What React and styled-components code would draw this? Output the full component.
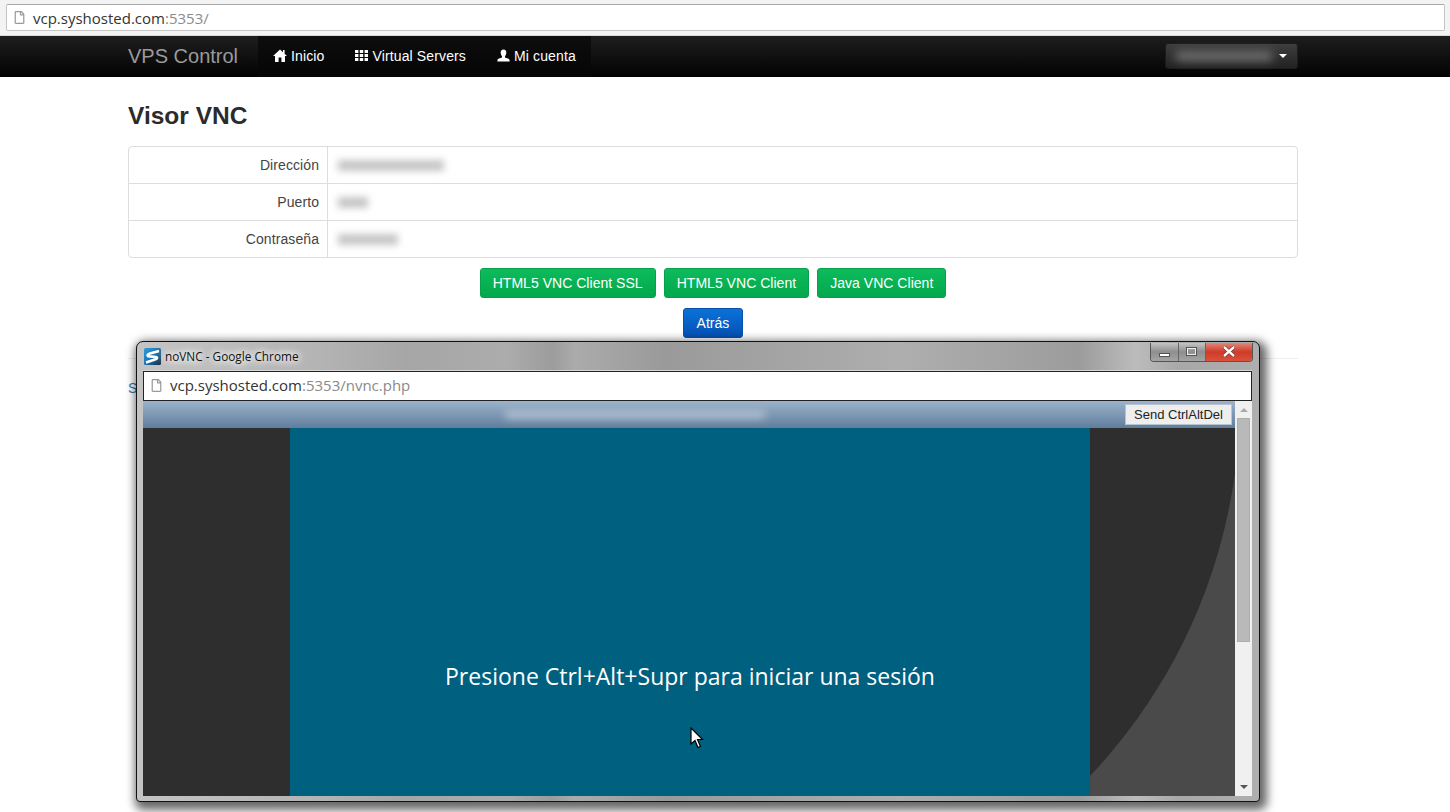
import React from 'react';
import styled, { createGlobalStyle } from 'styled-components';
import { FaRegFile } from 'react-icons/fa';

const GlobalStyle = createGlobalStyle`
  html, body {
    margin: 0;
    height: 812px;
    overflow: hidden;
    background: #fff;
    font-family: "Liberation Sans", Arial, sans-serif;
    font-size: 14px;
    color: #333;
  }
  * { box-sizing: border-box; }
`;

const Page = styled.div`
  position: relative;
  width: 1450px;
  height: 812px;
  overflow: hidden;
`;

const BrowserBar = styled.div`
  height: 36px;
  padding: 4px 5px 5px 6px;
  background: #f3f3f3;
  border-bottom: 1px solid #d8d8d8;
`;

const AddressBox = styled.div`
  height: 27px;
  display: flex;
  align-items: center;
  gap: 7px;
  padding-left: 6px;
  background: #fff;
  border: 1px solid #c4c4c4;
  border-top-color: #a8a8a8;
  border-radius: 2px;
  font-family: "Open Sans", sans-serif;
  font-size: 15px;
  color: #333;
`;

const PageIcon = styled(FaRegFile)`
  color: #999;
  font-size: 13px;
  flex: none;
`;

const Port = styled.span`
  color: #8a8a8a;
`;

const Navbar = styled.nav`
  height: 41px;
  padding: 0 152px 0 128px;
  display: flex;
  align-items: stretch;
  background: linear-gradient(to bottom, #1e1e1e, #020202);
`;

const Brand = styled.div`
  width: 130px;
  display: flex;
  align-items: center;
  color: #9a9a9a;
  font-size: 20px;
`;

const NavList = styled.div`
  display: flex;
  background: linear-gradient(to bottom, #0d0d0d, #050505);
`;

const NavItem = styled.div`
  display: flex;
  align-items: center;
  gap: 4px;
  padding: 0 15px 2px 15px;
  color: #fff;
  font-size: 14px;
  letter-spacing: 0.13px;
  & + & {
    padding-left: 16px;
  }
`;

const UserMenu = styled.div`
  margin: 7px 0 0 auto;
  width: 133px;
  height: 26px;
  display: flex;
  align-items: center;
  justify-content: space-between;
  padding: 0 10px 0 10px;
  background: linear-gradient(to bottom, #3e3e3e, #222);
  border: 1px solid #1c1c1c;
  border-radius: 3px;
`;

const UserBlur = styled.span`
  width: 96px;
  height: 10px;
  background: #6e6e6e;
  filter: blur(5px);
`;

const Caret = styled.span`
  width: 0;
  height: 0;
  border-left: 4px solid transparent;
  border-right: 4px solid transparent;
  border-top: 4px solid #fff;
`;

const Container = styled.main`
  width: 1170px;
  margin-left: 128px;
`;

const Title = styled.h2`
  margin: 25px 0 17px;
  font-size: 24.5px;
  line-height: 27px;
  font-weight: 700;
  color: #2b2b2b;
`;

const InfoTable = styled.div`
  border: 1px solid #ddd;
  border-radius: 4px;
`;

const InfoRow = styled.div`
  height: 36px;
  display: grid;
  grid-template-columns: 199px 1fr;
  align-items: stretch;
  & + & {
    height: 37px;
    border-top: 1px solid #ddd;
  }
`;

const InfoLabel = styled.div`
  display: flex;
  align-items: center;
  justify-content: flex-end;
  padding-right: 8px;
  border-right: 1px solid #ddd;
  color: #444;
  letter-spacing: 0.08px;
`;

const InfoValue = styled.div`
  display: flex;
  align-items: center;
  padding-left: 10px;
`;

const BlurValue = styled.span`
  width: ${(props) => props.$width}px;
  height: 11px;
  background: #c6c6c6;
  filter: blur(3.5px);
`;

const ButtonRow = styled.div`
  display: flex;
  justify-content: center;
  gap: 8px;
  margin-top: 10px;
`;

const Button = styled.div`
  height: 30px;
  padding: 0 ${(props) => (props.$blue ? 12.5 : 12)}px;
  display: flex;
  align-items: center;
  color: #fff;
  font-size: 14px;
  letter-spacing: 0.03px;
  border-radius: 3px;
  border: 1px solid ${(props) => (props.$blue ? '#0a4fa8' : '#08a04a')};
  background: ${(props) =>
    props.$blue
      ? 'linear-gradient(to bottom, #0a72d8, #0450b4)'
      : 'linear-gradient(to bottom, #0cbc5c, #04a84c)'};
`;

const Divider = styled.hr`
  margin: 20px 0 0;
  border: 0;
  border-top: 1px solid #eee;
`;

const FooterLink = styled.div`
  margin-top: 21px;
  color: #2a7ab0;
  font-size: 14px;
`;

const VncWindow = styled.section`
  position: absolute;
  left: 136px;
  top: 341px;
  width: 1124px;
  height: 461px;
  display: flex;
  flex-direction: column;
  padding: 0 7px 5px 6px;
  border: 1px solid #111;
  border-radius: 7px 7px 4px 4px;
  background-color: #b0b0b0;
  background-image: linear-gradient(
    to right,
    #c4c4c4 0%,
    #b4b4b4 16%,
    #a6a6a6 24%,
    #acacac 33%,
    #9c9c9c 37%,
    #ababab 39%,
    #9a9a9a 47%,
    #aeaeae 68%,
    #9c9c9c 84%,
    #bcbcbc 89%,
    #a8a8a8 93%,
    #aeaeae 100%
  );
  box-shadow: 3px 4px 10px 4px rgba(0, 0, 0, 0.6);
`;

const TitleBar = styled.div`
  height: 29px;
  flex: none;
  display: flex;
  align-items: center;
  gap: 4px;
  padding-left: 1px;
  border-bottom: 1px solid #d8d8d8;
`;

const WindowTitle = styled.span`
  font-family: "Open Sans", sans-serif;
  font-size: 11.8px;
  color: #111;
  text-shadow: 0 0 6px #fff, 0 0 8px #fff, 0 0 12px #fff;
`;

const WindowControls = styled.div`
  margin: -8px -1px 0 auto;
  height: 19px;
  width: 103px;
  display: flex;
  border: 1px solid #555;
  border-top: 0;
  border-radius: 0 0 4px 4px;
  overflow: hidden;
`;

const ControlButton = styled.div`
  flex: ${(props) => (props.$close ? '0 0 47px' : '1')};
  display: flex;
  align-items: center;
  justify-content: center;
  color: #fff;
  background: ${(props) =>
    props.$close
      ? 'linear-gradient(to bottom, #e0867a, #cf3b26 50%, #d9523d)'
      : 'linear-gradient(to bottom, #c4c4c4, #8e8e8e 50%, #a4a4a4)'};
  & + & {
    border-left: 1px solid #666;
  }
`;

const MinGlyph = styled.span`
  width: 11px;
  height: 4px;
  margin-top: 6px;
  background: #fff;
  border: 1px solid #555;
`;

const MaxGlyph = styled.span`
  width: 11px;
  height: 9px;
  border: 1px solid #555;
  outline: 1px solid #eee;
  outline-offset: -2px;
`;

const WindowAddress = styled.div`
  height: 30px;
  flex: none;
  display: flex;
  align-items: center;
  gap: 7px;
  padding: 0 0 2px 6px;
  background: #fff;
  border: 1px solid #222;
  font-family: "Open Sans", sans-serif;
  font-size: 15px;
  color: #333;
`;

const WindowBody = styled.div`
  flex: 1;
  min-height: 0;
  display: flex;
`;

const Viewer = styled.div`
  flex: 1;
  display: flex;
  flex-direction: column;
`;

const ViewerToolbar = styled.div`
  height: 27px;
  flex: none;
  display: flex;
  align-items: center;
  padding: 0 3px 0 362px;
  background: linear-gradient(to bottom, #9cb3cb, #5f7e9c);
`;

const ToolbarBlur = styled.span`
  width: 260px;
  height: 7px;
  background: #b9c6d3;
  filter: blur(4px);
`;

const SendButton = styled.div`
  margin-left: auto;
  width: 107px;
  height: 21px;
  display: flex;
  align-items: center;
  justify-content: center;
  background: #eeeeee;
  border: 1px solid #b8c4d0;
  color: #222;
  font-size: 13px;
`;

const Screen = styled.div`
  flex: 1;
  min-height: 0;
  display: flex;
`;

const SideDark = styled.div`
  width: 147px;
  background: #2e2e2e;
`;

const BlueScreen = styled.div`
  position: relative;
  width: 800px;
  padding-top: 232px;
  background: #00607f;
  color: #fff;
  font-family: "Open Sans", sans-serif;
  font-size: 23px;
  line-height: 32px;
  text-align: center;
`;

const Cursor = styled.svg`
  position: absolute;
  left: 400px;
  top: 299px;
`;

const Wallpaper = styled.svg`
  width: 145px;
  height: 100%;
  display: block;
  background: #2e2e2e;
`;

const Scrollbar = styled.div`
  width: 17px;
  flex: none;
  display: flex;
  flex-direction: column;
  align-items: center;
  background: #f0f0f0;
`;

const ScrollArrow = styled.span`
  flex: none;
  width: 0;
  height: 0;
  margin: ${(props) => (props.$down ? '0 0 7px' : '7px 0 6px')};
  border-left: 4px solid transparent;
  border-right: 4px solid transparent;
  ${(props) => (props.$down ? 'border-top: 4px solid #555;' : 'border-bottom: 4px solid #aaa;')}
`;

const ScrollThumb = styled.div`
  width: 13px;
  height: 224px;
  flex: none;
  margin-bottom: auto;
  background: #b9b9b9;
  border: 1px solid #adadad;
`;

const HomeIcon = () => (
  <svg width="14" height="13" viewBox="0 0 14 13">
    <path d="M7 0.5 L10 3.2 L10 1 L11.6 1 L11.6 4.7 L14 7 L12 7 L12 13 L8.4 13 L8.4 8.6 L5.6 8.6 L5.6 13 L2 13 L2 7 L0 7 Z" fill="#fff" />
  </svg>
);

const GridIcon = () => (
  <svg width="13" height="13" viewBox="0 0 13 13">
    <path d="M0 1h3.4v3H0zM4.8 1h3.4v3H4.8zM9.6 1H13v3H9.6zM0 5h3.4v3H0zM4.8 5h3.4v3H4.8zM9.6 5H13v3H9.6zM0 9h3.4v3H0zM4.8 9h3.4v3H4.8zM9.6 9H13v3H9.6z" fill="#fff" />
  </svg>
);

const UserIcon = () => (
  <svg width="13" height="13" viewBox="0 0 13 13">
    <path d="M6.5 0.5 C8.5 0.5 9.5 2 9.3 4 C9.2 5.6 8.4 6.6 8 7.2 L8 8.4 C9.5 9 12.6 9.4 12.6 11.2 L12.6 12.6 L0.4 12.6 L0.4 11.2 C0.4 9.4 3.5 9 5 8.4 L5 7.2 C4.6 6.6 3.8 5.6 3.7 4 C3.5 2 4.5 0.5 6.5 0.5 Z" fill="#fff" />
  </svg>
);

const rows = [
  { label: 'Dirección', width: 106 },
  { label: 'Puerto', width: 30 },
  { label: 'Contraseña', width: 60 },
];

const App = () => {
  return (
    <Page>
      <GlobalStyle />
      <BrowserBar>
        <AddressBox>
          <PageIcon />
          <span>
            vcp.syshosted.com<Port>:5353/</Port>
          </span>
        </AddressBox>
      </BrowserBar>

      <Navbar>
        <Brand>VPS Control</Brand>
        <NavList>
          <NavItem>
            <HomeIcon /> Inicio
          </NavItem>
          <NavItem>
            <GridIcon /> Virtual Servers
          </NavItem>
          <NavItem>
            <UserIcon /> Mi cuenta
          </NavItem>
        </NavList>
        <UserMenu>
          <UserBlur />
          <Caret />
        </UserMenu>
      </Navbar>

      <Container>
        <Title>Visor VNC</Title>
        <InfoTable>
          {rows.map((row) => (
            <InfoRow key={row.label}>
              <InfoLabel>{row.label}</InfoLabel>
              <InfoValue>
                <BlurValue $width={row.width} />
              </InfoValue>
            </InfoRow>
          ))}
        </InfoTable>
        <ButtonRow>
          <Button>HTML5 VNC Client SSL</Button>
          <Button>HTML5 VNC Client</Button>
          <Button>Java VNC Client</Button>
        </ButtonRow>
        <ButtonRow>
          <Button $blue>Atrás</Button>
        </ButtonRow>
        <Divider />
        <FooterLink>S</FooterLink>
      </Container>

      <VncWindow>
        <TitleBar>
          <svg width="17" height="17" viewBox="0 0 17 17">
            <defs>
              <linearGradient id="logoFill" x1="0" y1="0" x2="1" y2="1">
                <stop offset="0" stopColor="#2f9fe0" />
                <stop offset="0.55" stopColor="#1c6ea8" />
                <stop offset="1" stopColor="#1a2a3a" />
              </linearGradient>
            </defs>
            <rect width="17" height="17" rx="1.5" fill="url(#logoFill)" />
            <path d="M15 3 L6 5.5 Q2.5 6.6 4 8.2 L12 9 Q14.5 10 11.5 11.3 L2 14.5" fill="none" stroke="#fff" strokeWidth="2.6" />
          </svg>
          <WindowTitle>noVNC - Google Chrome</WindowTitle>
          <WindowControls>
            <ControlButton>
              <MinGlyph />
            </ControlButton>
            <ControlButton>
              <MaxGlyph />
            </ControlButton>
            <ControlButton $close>
              <svg width="14" height="11" viewBox="0 0 14 11">
                <path d="M2 1 L12 10 M12 1 L2 10" stroke="#5a1a10" strokeWidth="3.6" />
                <path d="M2 1 L12 10 M12 1 L2 10" stroke="#fff" strokeWidth="2.4" />
              </svg>
            </ControlButton>
          </WindowControls>
        </TitleBar>

        <WindowAddress>
          <PageIcon />
          <span>
            vcp.syshosted.com<Port>:5353/nvnc.php</Port>
          </span>
        </WindowAddress>

        <WindowBody>
          <Viewer>
            <ViewerToolbar>
              <ToolbarBlur />
              <SendButton>Send CtrlAltDel</SendButton>
            </ViewerToolbar>
            <Screen>
              <SideDark />
              <BlueScreen>
                Presione Ctrl+Alt+Supr para iniciar una sesión
                <Cursor width="14" height="24" viewBox="0 0 14 24">
                  <path d="M1 1 L1 17 L5 13.5 L8 20.5 L10.5 19.5 L7.5 12.5 L12.5 12.5 Z" fill="#fff" stroke="#000" strokeWidth="1.2" />
                </Cursor>
              </BlueScreen>
              <Wallpaper viewBox="0 0 145 368" preserveAspectRatio="none">
                <path d="M0 348 C55 290 125 190 145 45 L145 368 L0 368 Z" fill="#4a4a4a" />
              </Wallpaper>
            </Screen>
          </Viewer>
          <Scrollbar>
            <ScrollArrow />
            <ScrollThumb />
            <ScrollArrow $down />
          </Scrollbar>
        </WindowBody>
      </VncWindow>
    </Page>
  );
};

export default App;
